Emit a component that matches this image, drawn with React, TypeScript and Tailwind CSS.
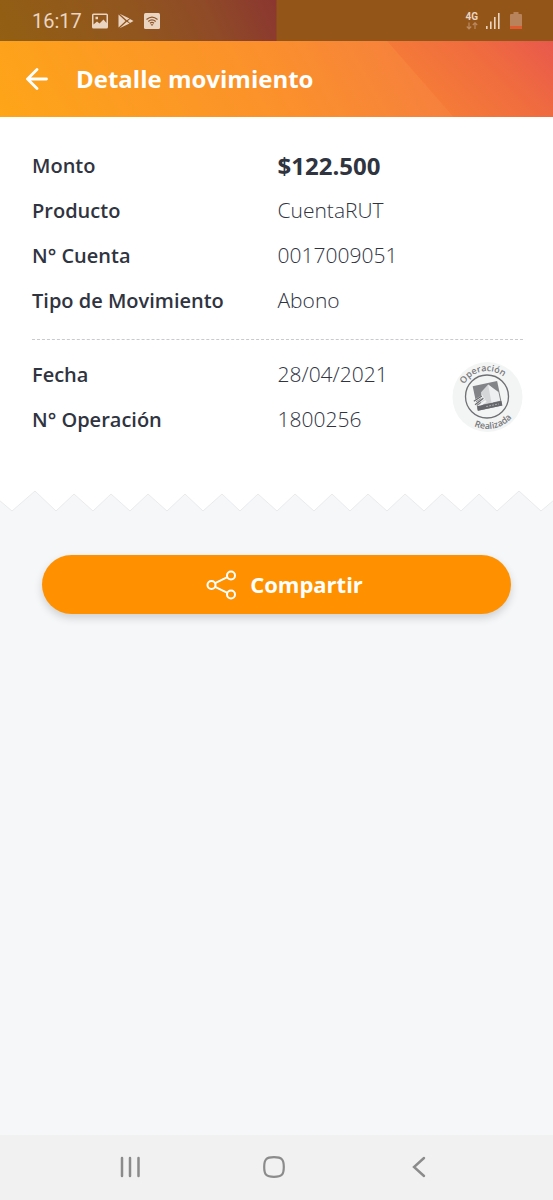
const movement = [
  { label: "Producto", value: "CuentaRUT" },
  { label: "N° Cuenta", value: "0017009051" },
  { label: "Tipo de Movimiento", value: "Abono" },
];

const operation = [
  { label: "Fecha", value: "28/04/2021" },
  { label: "N° Operación", value: "1800256" },
];

function StatusBar() {
  return (
    <div className="flex h-[41px] items-center justify-between bg-[linear-gradient(65deg,#925f13_0%,#91551f_50%,#8f4a27_75%,#8b3630_100%)] bg-[length:50%_100%] bg-no-repeat bg-[#945519] pr-[31px] pl-8 font-['Roboto',sans-serif] text-[#ead5c3]">
      <div className="flex items-center gap-[10px]">
        <span className="text-xl">16:17</span>
        <svg className="h-4 w-4" viewBox="0 0 16 16" fill="currentColor">
          <path
            fillRule="evenodd"
            d="M1.500 .5h13a1.500 1.500 0 0 1 1.500 1.500v12a1.500 1.500 0 0 1-1.500 1.500h-13A1.500 1.500 0 0 1 0 14V2A1.500 1.500 0 0 1 1.500 .5zM1.500 2v9.500l3.500-3 2.500 2 4-4 3 3.500V2zM3.500 3.800h2.500v2.500H3.500z"
          />
        </svg>
        <svg className="h-4 w-4" viewBox="0 0 16 16" fill="currentColor">
          <path d="M.5 1.500L7.500 8l-7 6.500zM1.500 .8L11.500 5.600 8.800 7.300zM1.500 15.200l10-4.800L8.800 8.700zM12 6L15.500 8 12 10 9.800 8z" />
        </svg>
        <svg className="h-4 w-4" viewBox="0 0 16 16" fill="none">
          <rect width="16" height="16" rx="1.500" fill="currentColor" />
          <g stroke="#8f5427" strokeWidth="1.200">
            <path d="M2.500 6.500q5.500-4.800 11 0M4.300 8.500q3.700-3.200 7.400 0M6 10.300q2-1.700 4 0" />
          </g>
          <path d="M6.500 11.300h3L8 13z" fill="#8f5427" />
        </svg>
      </div>
      <div className="flex items-center">
        <div className="flex flex-col items-center">
          <span className="text-[10px] leading-[10px] font-bold">4G</span>
          <svg className="h-2 w-3 text-[#b98a62]" viewBox="0 0 12 8" fill="none" stroke="currentColor" strokeWidth="1.200">
            <path d="M3 .5v6M.8 4.500L3 6.800l2.200-2.300M9 7V1M6.800 3L9 .8 11.200 3" />
          </svg>
        </div>
        <svg className="ml-2 h-4 w-4" viewBox="0 0 16 16" fill="currentColor">
          <path d="M0 13h1.600v3H0zM4 8.500h1.600V16H4zM8 4h1.600v12H8zM12 0h1.600v16H12z" />
        </svg>
        <svg className="ml-2 h-[17px] w-3" viewBox="0 0 12 17">
          <path d="M3.500 0h5v2H11a1 1 0 0 1 1 1v13a1 1 0 0 1-1 1H1a1 1 0 0 1-1-1V3a1 1 0 0 1 1-1h2.500z" fill="#b8835a" />
          <path d="M0 14h12v2a1 1 0 0 1-1 1H1a1 1 0 0 1-1-1z" fill="#df5b2f" />
        </svg>
      </div>
    </div>
  );
}

function Header() {
  return (
    <header className="relative flex h-[76px] items-center gap-7 bg-[linear-gradient(60deg,#fea518_0%,#fb902c_50%,#f57e40_80%)] px-[26px]">
      <div className="absolute inset-0 bg-[linear-gradient(45deg,#f67d36_70%,#ef6a40_88%,#e8584d_100%)] [clip-path:polygon(70%_0,100%_0,100%_100%,82%_100%)]" />
      <button type="button" aria-label="Volver" className="relative text-white">
        <svg className="h-[22px] w-[22px]" viewBox="0 0 22 22" fill="none" stroke="currentColor" strokeWidth="2.800" strokeLinecap="round" strokeLinejoin="round">
          <path d="M20.500 11H2M11 1.500L1.500 11l9.500 9.500" />
        </svg>
      </button>
      <h1 className="relative text-2xl font-bold text-white">Detalle movimiento</h1>
    </header>
  );
}

function Row({ label, value }: { label: string; value: string }) {
  return (
    <div className="grid h-[45px] grid-cols-2 items-center">
      <dt className="text-xl font-semibold">{label}</dt>
      <dd className="text-[21px] font-light">{value}</dd>
    </div>
  );
}

function Stamp() {
  return (
    <svg className="col-start-2 row-start-1 h-[70px] w-[70px] self-center justify-self-end overflow-visible" viewBox="0 0 70 70">
      <defs>
        <path id="stamp-top" d="M8 35a26 26 0 0 1 52 0" />
        <path id="stamp-bottom" d="M2.500 35a32 32 0 0 0 64 0" />
      </defs>
      <circle cx="34.500" cy="35" r="35" fill="#f3f4f4" />
      <circle cx="34" cy="34.500" r="21.500" fill="none" stroke="#6f7073" strokeWidth="1.300" />
      <g transform="rotate(-12 34 34)">
        <path d="M22 21.500h25v25H22z" fill="#838487" />
        <path d="M28 34l1-5 8.500-6 3 4-2 14.500H26z" fill="#d5d6d8" />
        <path d="M37.500 23L46 32.500v9h-9z" fill="#eeeff0" />
        <path d="M20 36.500l10-3.500M20 40l11-4.500M22 43l10-4.500" stroke="#f4f4f4" strokeWidth="2.200" />
        <path d="M20 36.500l9-3.500M20.500 40l9.500-4.500" stroke="#67686b" strokeWidth="1.200" />
        <path d="M22 42h25v4.500H22z" fill="#66676a" />
        <path d="M31 44.200h13" stroke="#a9aaac" strokeWidth="1" strokeDasharray="2 1" />
      </g>
      <g fill="#77787b" className="text-[9px] font-semibold">
        <text textAnchor="middle">
          <textPath href="#stamp-top" startOffset="44%">Operación</textPath>
        </text>
        <text textAnchor="middle">
          <textPath href="#stamp-bottom" startOffset="57%">Realizada</textPath>
        </text>
      </g>
    </svg>
  );
}

function TornEdge() {
  return (
    <svg className="block w-full" viewBox="0 0 553 24" fill="#fff">
      <path
        d="M-1 0V11L12 22 35 2 56 22 74 5 93 22 111 5 130 22 148 5 167 22 185 5 203 22 222 5 240 22 258 5 277 22 295 5 314 22 332 5 350 22 368 5 387 22 405 5 424 22 442 5 461 22 479 5 497 22 519 2 541 22 554 11V0z"
        stroke="#e9eaec"
      />
      <path d="M0 0h553v1H0z" />
    </svg>
  );
}

function NavBar() {
  return (
    <nav className="mt-auto flex h-[65px] items-center justify-center gap-[120px] bg-[#f1f1f1] pr-1.5 pb-0.5 text-[#8b8b8b]">
      <button type="button" aria-label="Recientes">
        <svg className="h-6 w-6" viewBox="0 0 24 24" fill="none" stroke="currentColor" strokeWidth="2.500" strokeLinecap="round">
          <path d="M4 3v18M12 3v18M20.500 3v18" />
        </svg>
      </button>
      <button type="button" aria-label="Inicio">
        <svg className="h-6 w-6" viewBox="0 0 24 24" fill="none" stroke="currentColor" strokeWidth="2.200">
          <path d="M12 2.200c7.800 0 9.800 2 9.800 9.800s-2 9.800-9.800 9.800-9.800-2-9.800-9.800 2-9.800 9.800-9.800z" />
        </svg>
      </button>
      <button type="button" aria-label="Atrás">
        <svg className="h-6 w-6" viewBox="0 0 24 24" fill="none" stroke="currentColor" strokeWidth="2.400" strokeLinecap="round">
          <path d="M18 3L8 12l10 9" />
        </svg>
      </button>
    </nav>
  );
}

export default function App() {
  return (
    <div className="flex min-h-screen flex-col bg-[#f5f7f9] font-['Open_Sans','Noto_Sans',sans-serif] text-[#30343f]">
      <StatusBar />
      <Header />
      <main>
        <section className="bg-white pt-[26px] pr-[30px] pb-[47px] pl-8">
          <dl>
            <div className="grid h-[45px] grid-cols-2 items-center">
              <dt className="text-xl font-semibold">Monto</dt>
              <dd className="text-2xl font-bold">$122.500</dd>
            </div>
            {movement.map((item) => (
              <Row key={item.label} {...item} />
            ))}
          </dl>
          <hr className="mt-4 mb-3 border-dashed border-[#c9cacd]" />
          <div className="grid grid-cols-2">
            <dl className="col-span-2 col-start-1 row-start-1">
              {operation.map((item) => (
                <Row key={item.label} {...item} />
              ))}
            </dl>
            <Stamp />
          </div>
        </section>
        <TornEdge />
        <div className="px-[42px] pt-[42px]">
          <button type="button" className="flex h-[59px] w-full items-center justify-center gap-3.5 rounded-full bg-[#ff9100] pl-4 text-[22px] font-bold text-white shadow-[0_4px_8px_rgba(0,0,0,0.16)]">
            <svg className="h-[30px] w-[30px]" viewBox="0 0 30 30" fill="none" stroke="currentColor" strokeWidth="2">
              <circle cx="5.500" cy="15" r="4" />
              <circle cx="25" cy="5.500" r="4" />
              <circle cx="25" cy="24.500" r="4" />
              <path d="M9.100 13.200l12.300-6M9.100 16.800l12.300 6" />
            </svg>
            Compartir
          </button>
        </div>
      </main>
      <NavBar />
    </div>
  );
}
